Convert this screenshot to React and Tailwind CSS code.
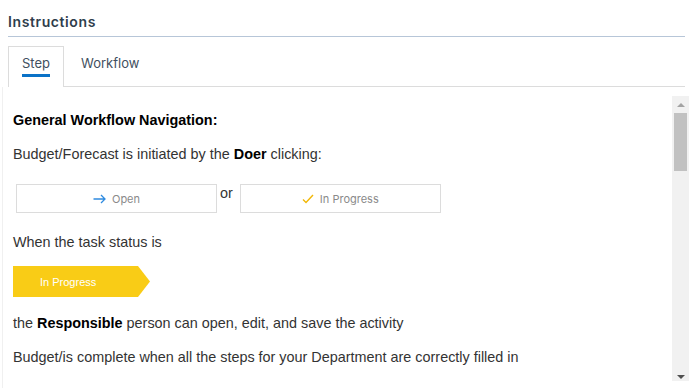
import React from 'react';

const ArrowIcon = () => (
  <svg width="13" height="10" viewBox="0 0 13 10" fill="none" stroke="#2f8be0" strokeWidth="1.3">
    <path d="M0.5 5h11.5M8 1l4 4-4 4" />
  </svg>
);

const CheckIcon = () => (
  <svg width="12" height="10" viewBox="0 0 12 10" fill="none" stroke="#f2b705" strokeWidth="1.4">
    <path d="M1 5.5l3 3L11 1" />
  </svg>
);

const StatusButton = ({ icon, label }) => (
  <div className="w-[201px] h-[29px] border border-[#dcdcdc] bg-white flex items-center justify-center gap-[6px] font-['Inter',sans-serif] text-[11px] text-[#8a8a8a]">
    {icon}
    <span>{label}</span>
  </div>
);

const Scrollbar = () => (
  <div className="w-[17px] h-[285px] mt-[9px] mr-[9px] bg-[#f1f1f1] flex flex-col items-center">
    <div className="mt-[7px] w-0 h-0 border-l-[4px] border-r-[4px] border-b-[4px] border-l-transparent border-r-transparent border-b-[#a3a3a3]" />
    <div className="mt-[6px] w-[13px] h-[58px] bg-[#c1c1c1]" />
    <div className="flex-1" />
    <div className="mb-[2px] w-0 h-0 border-l-[4px] border-r-[4px] border-t-[4px] border-l-transparent border-r-transparent border-t-[#505050]" />
  </div>
);

export default function App() {
  return (
    <div className="w-[698px] h-[388px] bg-white overflow-hidden">
      {/* Header */}
      <div className="ml-[8px] mr-[13px] pt-[13px] pb-[5px] border-b border-[#b7c6d8]">
        <h2 className="font-['Inter',sans-serif] font-semibold text-[14px] leading-[18px] tracking-[0.6px] text-[#2f3d4c]">
          Instructions
        </h2>
      </div>

      {/* Tabs */}
      <div className="ml-[8px] mr-[13px] mt-[9px] flex border-b border-[#dcdcdc] font-['Inter',sans-serif] text-[13px] leading-[16px]">
        <div className="-mb-px px-[13px] pt-[8px] h-[41px] border border-b-0 border-[#dcdcdc] bg-white flex flex-col items-start">
          <span className="text-[#3f4f60]">Step</span>
          <div className="mt-[3px] h-[3px] w-full bg-[#0a72c7]" />
        </div>
        <div className="pl-[17px] pt-[9px]">
          <span className="text-[#3f4f60]">Workflow</span>
        </div>
      </div>

      {/* Content */}
      <div className="ml-[2px] h-[301px] flex border-l border-[#f0f0f0]">
        <div className="flex-1 overflow-hidden pl-[10px] font-['Liberation_Sans',Arial,sans-serif] text-[14.4px] leading-[16px] text-[#333333]">
          <p className="mt-[25px] font-bold text-black">General Workflow Navigation:</p>
          <p className="mt-[18px]">
            Budget/Forecast is initiated by the <b className="text-black">Doer</b> clicking:
          </p>
          <div className="mt-[22px] ml-[3px] flex items-start">
            <StatusButton icon={<ArrowIcon />} label="Open" />
            <span className="ml-[3px] mr-[7px] mt-px">or</span>
            <StatusButton icon={<CheckIcon />} label="In Progress" />
          </div>
          <p className="mt-[21px]">When the task status is</p>
          <div className="mt-[16px] w-[137px] h-[31px] bg-[#f9cc16] flex items-center pl-[27px] text-[11px] text-white [clip-path:polygon(0_0,125px_0,137px_50%,125px_100%,0_100%)]">
            In Progress
          </div>
          <p className="mt-[18px]">
            the <b className="text-black">Responsible</b> person can open, edit, and save the activity
          </p>
          <p className="mt-[18px]">
            Budget/is complete when all the steps for your Department are correctly filled in
          </p>
        </div>
        <Scrollbar />
      </div>
    </div>
  );
}
